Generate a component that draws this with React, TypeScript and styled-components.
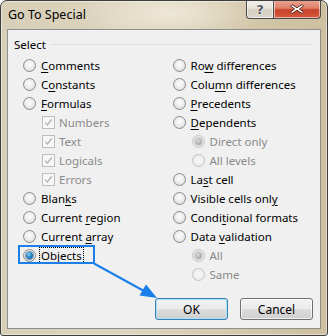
import React from 'react';
import styled, { createGlobalStyle } from 'styled-components';

const GlobalStyle = createGlobalStyle`
  html, body {
    margin: 0;
    padding: 0;
    background: #ffffff;
  }
  body {
    font-family: "Noto Sans", "Open Sans", Arial, sans-serif;
    font-size: 11.5px;
    color: #000;
  }
`;

const Window = styled.div`
  position: relative;
  box-sizing: border-box;
  width: 328px;
  height: 336px;
  display: flex;
  flex-direction: column;
  padding: 0 6px 6px;
  border: 1px solid #3d3d3d;
  border-radius: 7px 7px 3px 3px;
  background:
    radial-gradient(ellipse 90px 30px at 170px 12px, rgba(240, 234, 218, 0.9), rgba(240, 234, 218, 0)),
    linear-gradient(90deg, #d8cfb8 0%, #ddd4bf 40%, #d3c7aa 75%, #cdbf9f 100%);
  box-shadow: inset 0 0 0 1px rgba(255, 255, 255, 0.45);
  overflow: hidden;
`;

const TitleBar = styled.div`
  height: 28px;
  display: flex;
  justify-content: space-between;
  align-items: flex-start;
`;

const Title = styled.div`
  margin: 6px 0 0 1px;
  font-size: 12.5px;
  line-height: 16px;
  color: #000;
`;

const CaptionButtons = styled.div`
  display: flex;
  margin-top: -1px;
`;

const CaptionButton = styled.div<{ $close?: boolean }>`
  box-sizing: border-box;
  height: 19px;
  width: ${p => (p.$close ? 47 : 28)}px;
  display: flex;
  align-items: center;
  justify-content: center;
  border: 1px solid #4b4b4b;
  border-top: none;
  border-left: ${p => (p.$close ? 'none' : '1px solid #4b4b4b')};
  border-radius: ${p => (p.$close ? '0 0 4px 0' : '0 0 0 4px')};
  background: ${p =>
    p.$close
      ? 'linear-gradient(180deg, #eba594 0%, #de7f68 45%, #c8432a 55%, #d45a3d 100%)'
      : 'linear-gradient(180deg, #f3f1ec 0%, #e6e2d8 45%, #d4cfc2 55%, #dcd8cc 100%)'};
  box-shadow: inset 0 0 0 1px rgba(255, 255, 255, 0.55);
  color: #55595f;
  font-family: "DejaVu Sans", sans-serif;
  font-weight: bold;
  font-size: 13px;
  text-shadow: 0 0 2px #fff, 0 0 1px #fff;
`;

const Panel = styled.div`
  flex: 1;
  display: flex;
  flex-direction: column;
  background: #f0f0f0;
  border: 1px solid #8e8e8e;
`;

const GroupHeader = styled.div`
  display: flex;
  align-items: center;
  height: 16px;
  margin: 6px 7px 0 6px;
`;

const GroupLine = styled.div`
  flex: 1;
  height: 1px;
  margin-left: 5px;
  background: #d5dfe5;
`;

const Columns = styled.div`
  display: grid;
  grid-template-columns: 149.5px 1fr;
  padding-left: 15px;
  margin-top: 3.5px;
`;

const Column = styled.div`
  display: flex;
  flex-direction: column;
`;

const Row = styled.div<{ $indent?: boolean; $disabled?: boolean }>`
  height: 19px;
  display: flex;
  align-items: center;
  padding-left: ${p => (p.$indent ? 19 : 0)}px;
  color: ${p => (p.$disabled ? '#8a8a8a' : '#000')};
  white-space: nowrap;
`;

const Label = styled.span`
  line-height: 15px;
`;

const Radio = styled.span<{ $checked?: boolean; $disabled?: boolean }>`
  box-sizing: border-box;
  width: 13px;
  height: 13px;
  margin-right: 5px;
  border-radius: 50%;
  flex-shrink: 0;
  display: flex;
  align-items: center;
  justify-content: center;
  border: 1px solid ${p => (p.$disabled ? '#c4c4c4' : '#8b8b8b')};
  background: ${p =>
    p.$disabled
      ? 'radial-gradient(circle at 50% 50%, #f8f8f8 0%, #efefef 55%, #e2e2e2 100%)'
      : 'radial-gradient(circle at 50% 40%, #fdfdfd 0%, #eeeeee 45%, #d2d2d2 100%)'};

  &::after {
    content: '';
    display: ${p => (p.$checked ? 'block' : 'none')};
    width: 7px;
    height: 7px;
    border-radius: 50%;
    background: ${p =>
      p.$disabled
        ? 'radial-gradient(circle at 40% 35%, #d8d8d8 0%, #a6a6a6 80%)'
        : 'radial-gradient(circle at 40% 35%, #8ed0f5 0%, #2a86c6 45%, #0f4e83 100%)'};
    box-shadow: 0 0 0 1px ${p => (p.$disabled ? 'rgba(160,160,160,0.4)' : 'rgba(20, 70, 120, 0.5)')};
  }
`;

const CheckBox = styled.span`
  box-sizing: border-box;
  width: 13px;
  height: 13px;
  margin-right: 4px;
  flex-shrink: 0;
  display: flex;
  align-items: center;
  justify-content: center;
  border: 1px solid #bdbdbd;
  background: #f7f7f7;
`;

const Key = styled.span`
  text-decoration: underline;
  text-underline-offset: 2px;
  text-decoration-thickness: 1px;
`;

const Focus = styled.span`
  outline: 1px dotted #000;
  outline-offset: 0;
  padding: 0 1px;
  margin-left: -1px;
  line-height: 15px;
`;

const ButtonRow = styled.div`
  display: flex;
  justify-content: flex-end;
  gap: 12px;
  margin-top: 14.5px;
  padding-right: 7px;
`;

const Button = styled.div<{ $default?: boolean }>`
  box-sizing: border-box;
  width: 73px;
  height: 22px;
  display: flex;
  align-items: center;
  justify-content: center;
  border: 1px solid ${p => (p.$default ? '#3c7fb1' : '#707070')};
  border-radius: 3px;
  background: linear-gradient(180deg, #f2f2f2 0%, #ebebeb 48%, #dddddd 52%, #cfcfcf 100%);
  box-shadow: inset 0 0 0 1px ${p => (p.$default ? '#a9e1f7' : 'rgba(255,255,255,0.7)')};
  font-size: 12px;
`;

const Overlay = styled.svg`
  position: absolute;
  top: -1px;
  left: -1px;
  width: 328px;
  height: 336px;
  pointer-events: none;
`;

const CloseGlyph = () => (
  <svg width="16" height="12" viewBox="0 0 16 12">
    <path
      d="M3 1.5 L8 4.7 L13 1.5 L14.5 3 L10.5 6 L14.5 9 L13 10.5 L8 7.3 L3 10.5 L1.5 9 L5.5 6 L1.5 3 Z"
      fill="#ffffff"
      stroke="#5a2a20"
      strokeWidth="1"
      strokeLinejoin="round"
    />
  </svg>
);

const Check = () => (
  <svg width="9" height="9" viewBox="0 0 9 9">
    <path d="M1.2 4.6 L3.4 7 L7.8 1.4" fill="none" stroke="#b0b0b0" strokeWidth="1.3" />
  </svg>
);

export default function App() {
  return (
    <>
      <GlobalStyle />
      <Window>
        <TitleBar>
          <Title>Go To Special</Title>
          <CaptionButtons>
            <CaptionButton>?</CaptionButton>
            <CaptionButton $close>
              <CloseGlyph />
            </CaptionButton>
          </CaptionButtons>
        </TitleBar>
        <Panel>
          <GroupHeader>
            <span>Select</span>
            <GroupLine />
          </GroupHeader>
          <Columns>
            <Column>
              <Row><Radio /><Label><Key>C</Key>omments</Label></Row>
              <Row><Radio /><Label>C<Key>o</Key>nstants</Label></Row>
              <Row><Radio /><Label><Key>F</Key>ormulas</Label></Row>
              <Row $indent $disabled><CheckBox><Check /></CheckBox><Label>Numbers</Label></Row>
              <Row $indent $disabled><CheckBox><Check /></CheckBox><Label>Text</Label></Row>
              <Row $indent $disabled><CheckBox><Check /></CheckBox><Label>Logicals</Label></Row>
              <Row $indent $disabled><CheckBox><Check /></CheckBox><Label>Errors</Label></Row>
              <Row><Radio /><Label>Blan<Key>k</Key>s</Label></Row>
              <Row><Radio /><Label>Current <Key>r</Key>egion</Label></Row>
              <Row><Radio /><Label>Current <Key>a</Key>rray</Label></Row>
              <Row><Radio $checked /><Focus>O<Key>b</Key>jects</Focus></Row>
            </Column>
            <Column>
              <Row><Radio /><Label>Ro<Key>w</Key> differences</Label></Row>
              <Row><Radio /><Label>Colu<Key>m</Key>n differences</Label></Row>
              <Row><Radio /><Label><Key>P</Key>recedents</Label></Row>
              <Row><Radio /><Label><Key>D</Key>ependents</Label></Row>
              <Row $indent $disabled><Radio $checked $disabled /><Label>Direct only</Label></Row>
              <Row $indent $disabled><Radio $disabled /><Label>All levels</Label></Row>
              <Row><Radio /><Label>La<Key>s</Key>t cell</Label></Row>
              <Row><Radio /><Label>Visible cells onl<Key>y</Key></Label></Row>
              <Row><Radio /><Label>Condi<Key>t</Key>ional formats</Label></Row>
              <Row><Radio /><Label>Data <Key>v</Key>alidation</Label></Row>
              <Row $indent $disabled><Radio $checked $disabled /><Label>All</Label></Row>
              <Row $indent $disabled><Radio $disabled /><Label>Same</Label></Row>
            </Column>
          </Columns>
          <ButtonRow>
            <Button $default>OK</Button>
            <Button>Cancel</Button>
          </ButtonRow>
        </Panel>
        <Overlay viewBox="0 0 328 336">
          <rect x="19" y="246" width="75" height="17" fill="none" stroke="#1a7fe8" strokeWidth="2" />
          <line x1="94" y1="263.5" x2="144" y2="291" stroke="#1a7fe8" strokeWidth="2" />
          <polygon points="157,298 139.5,295.5 146,284.5" fill="#1a7fe8" />
        </Overlay>
      </Window>
    </>
  );
}
